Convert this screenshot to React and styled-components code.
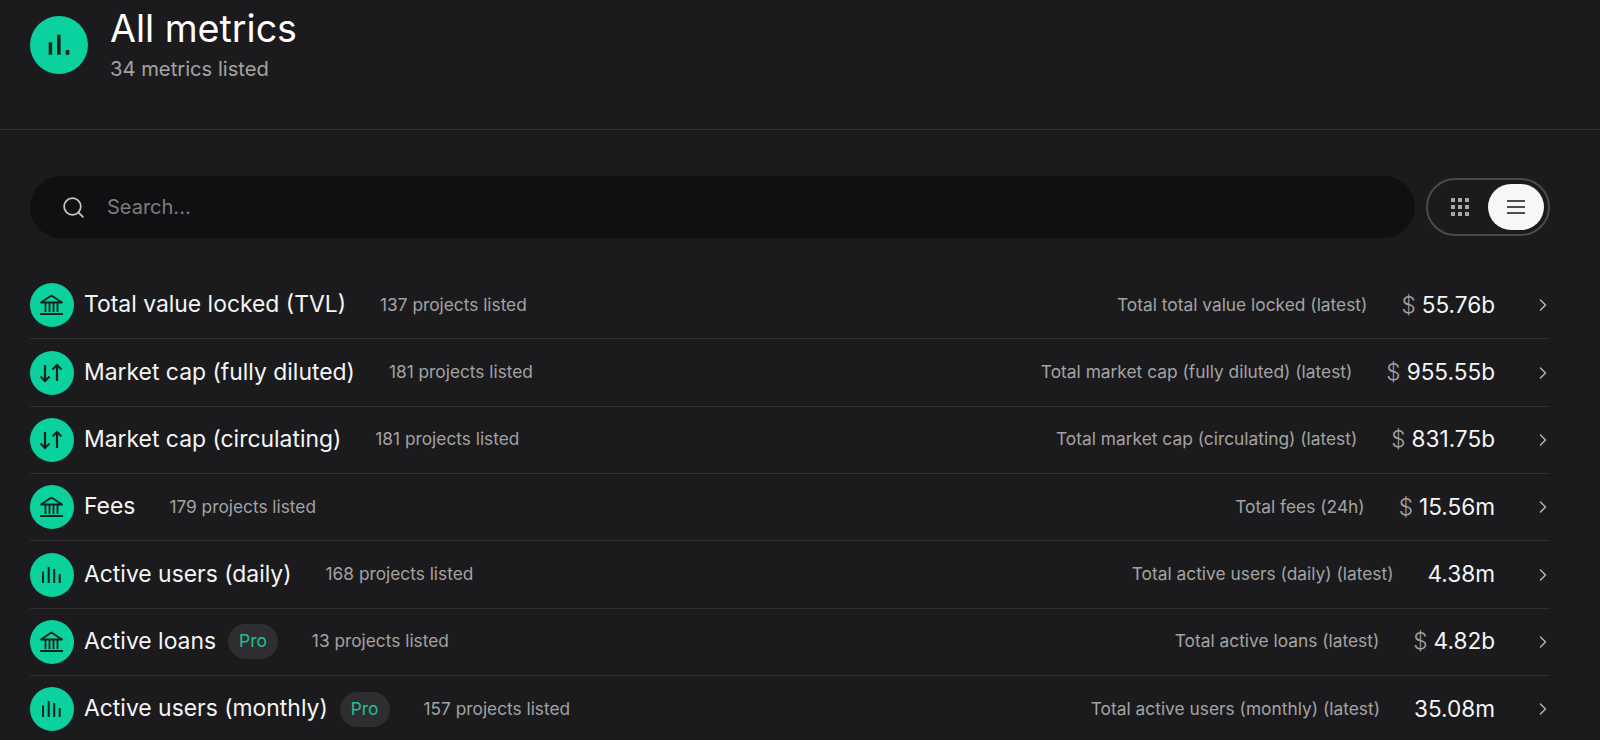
import React from 'react';
import styled, { createGlobalStyle } from 'styled-components';
import { Search, ChevronRight } from 'lucide-react';

const metrics = [
  { name: 'Total value locked (TVL)', icon: 'bank', projects: 137, label: 'Total total value locked (latest)', currency: true, value: '55.76b' },
  { name: 'Market cap (fully diluted)', icon: 'swap', projects: 181, label: 'Total market cap (fully diluted) (latest)', currency: true, value: '955.55b' },
  { name: 'Market cap (circulating)', icon: 'swap', projects: 181, label: 'Total market cap (circulating) (latest)', currency: true, value: '831.75b' },
  { name: 'Fees', icon: 'bank', projects: 179, label: 'Total fees (24h)', currency: true, value: '15.56m' },
  { name: 'Active users (daily)', icon: 'bars', projects: 168, label: 'Total active users (daily) (latest)', value: '4.38m' },
  { name: 'Active loans', icon: 'bank', pro: true, projects: 13, label: 'Total active loans (latest)', currency: true, value: '4.82b' },
  { name: 'Active users (monthly)', icon: 'bars', pro: true, projects: 157, label: 'Total active users (monthly) (latest)', value: '35.08m' },
];

const iconInk = '#10231d';

const BankIcon = () => (
  <svg width="44" height="44" viewBox="0 0 44 44" fill="none" stroke={iconInk} strokeWidth="1.8">
    <path d="M21.5 12.5L32 19.5H11z" strokeLinejoin="round" />
    <path d="M15.5 20v9M19.5 20v9M23.5 20v9M27.5 20v9" />
    <path d="M10 31h23" strokeWidth="2" />
  </svg>
);

const SwapIcon = () => (
  <svg width="44" height="44" viewBox="0 0 44 44" fill="none" stroke={iconInk} strokeWidth="2.2">
    <path d="M15 14v16M10.5 25.5L15 30l4.5-4.5" />
    <path d="M27 30V14M22.5 18.5L27 14l4.5 4.5" />
  </svg>
);

const BarsIcon = () => (
  <svg width="44" height="44" viewBox="0 0 44 44" fill="none" stroke={iconInk} strokeWidth="2">
    <path d="M13 18.5V30M18.7 14v16M24.2 16v14M29.7 21v9" />
  </svg>
);

const HeaderBars = () => (
  <svg width="58" height="58" viewBox="0 0 58 58" fill={iconInk}>
    <rect x="18.7" y="26.3" width="3.4" height="12.4" />
    <rect x="27" y="18.7" width="3.6" height="20" />
    <rect x="35.7" y="34" width="3.6" height="4.7" />
  </svg>
);

const GridIcon = () => (
  <svg width="18" height="18" viewBox="0 0 18 18" fill="#a8a8a8">
    {[0, 7, 14].map((y) =>
      [0, 7, 14].map((x) => <rect key={`${x}-${y}`} x={x} y={y} width="4" height="4" />)
    )}
  </svg>
);

const ListIcon = () => (
  <svg width="18" height="14" viewBox="0 0 18 14" fill="none" stroke="#4d4d4f" strokeWidth="2">
    <path d="M0 1h18M0 7h18M0 13h18" />
  </svg>
);

const MetricIcon = ({ type }) => {
  if (type === 'bank') return <BankIcon />;
  if (type === 'swap') return <SwapIcon />;
  return <BarsIcon />;
};

const App = () => (
  <Page>
    <GlobalStyle />
    <Header>
      <HeaderIcon>
        <HeaderBars />
      </HeaderIcon>
      <HeaderText>
        <Title>All metrics</Title>
        <Subtitle>34 metrics listed</Subtitle>
      </HeaderText>
    </Header>

    <Content>
      <Toolbar>
        <SearchBar>
          <Search size={25} strokeWidth={1.7} color="#c4c4c4" />
          <SearchInput placeholder="Search..." />
        </SearchBar>
        <ViewToggle>
          <ToggleButton>
            <GridIcon />
          </ToggleButton>
          <ToggleButton $active>
            <ListIcon />
          </ToggleButton>
        </ViewToggle>
      </Toolbar>

      <List>
        {metrics.map((m) => (
          <Row key={m.name}>
            <RowIcon>
              <MetricIcon type={m.icon} />
            </RowIcon>
            <Name>{m.name}</Name>
            {m.pro && <ProBadge>Pro</ProBadge>}
            <Projects>{m.projects} projects listed</Projects>
            <Total>{m.label}</Total>
            <Value>
              {m.currency && <Currency>$</Currency>}
              {m.value}
            </Value>
            <Chevron>
              <ChevronRight size={20} strokeWidth={1.7} color="#b5b5b5" />
            </Chevron>
          </Row>
        ))}
      </List>
    </Content>
  </Page>
);

const GlobalStyle = createGlobalStyle`
  html, body {
    margin: 0;
    height: 100%;
    background: #1b1b1d;
    overflow: hidden;
  }
`;

const Page = styled.div`
  height: 740px;
  overflow: hidden;
  background: #1b1b1d;
  font-family: Inter, 'Liberation Sans', sans-serif;
  color: #fff;
`;

const Header = styled.header`
  box-sizing: border-box;
  height: 130px;
  display: flex;
  gap: 22px;
  padding: 16px 30px 0;
  border-bottom: 1px solid #2f2f31;
`;

const HeaderIcon = styled.div`
  width: 58px;
  height: 58px;
  border-radius: 50%;
  background: #0bd19f;
`;

const HeaderText = styled.div`
  display: flex;
  flex-direction: column;
`;

const Title = styled.h1`
  margin: -10px 0 0;
  font-size: 37.6px;
  line-height: 46px;
  font-weight: 400;
`;

const Subtitle = styled.div`
  margin-top: 4px;
  font-size: 20.2px;
  line-height: 26px;
  color: #a3a3a3;
`;

const Content = styled.main`
  padding: 46px 50px 0 30px;
`;

const Toolbar = styled.div`
  display: flex;
  align-items: center;
  gap: 11px;
  margin-bottom: 34px;
`;

const SearchBar = styled.div`
  flex: 1;
  height: 62px;
  box-sizing: border-box;
  padding: 0 31px;
  border-radius: 31px;
  background: #101013;
  display: flex;
  align-items: center;
  gap: 21px;
`;

const SearchInput = styled.input`
  flex: 1;
  padding: 0;
  border: 0;
  outline: 0;
  background: transparent;
  font: 400 20px Inter, 'Liberation Sans', sans-serif;
  color: #fff;

  &::placeholder {
    color: #7d7d7f;
    opacity: 1;
  }
`;

const ViewToggle = styled.div`
  box-sizing: border-box;
  width: 124px;
  height: 58px;
  padding: 4px 4px 4px 10px;
  border: 2px solid #4a4a4c;
  border-radius: 29px;
  display: flex;
  align-items: center;
  justify-content: space-between;
`;

const ToggleButton = styled.div`
  width: ${(p) => (p.$active ? '56px' : '44px')};
  height: 46px;
  border-radius: 23px;
  background: ${(p) => (p.$active ? '#f7f7f7' : 'transparent')};
  display: flex;
  align-items: center;
  justify-content: center;
`;

const List = styled.div`
  display: flex;
  flex-direction: column;
`;

const Row = styled.div`
  box-sizing: border-box;
  height: 67.35px;
  display: flex;
  align-items: center;
  border-bottom: 1px solid #2f2f31;
`;

const RowIcon = styled.div`
  flex: none;
  width: 44px;
  height: 44px;
  border-radius: 50%;
  background: #0bd19f;
  margin-right: 10px;
`;

const Name = styled.div`
  margin-bottom: 2px;
  font-size: 22.9px;
  white-space: nowrap;
  color: #f5f5f5;
`;

const ProBadge = styled.div`
  margin-left: 12px;
  padding: 0 11px;
  height: 35px;
  border-radius: 17.5px;
  background: #2e2e30;
  color: #1fbf95;
  font-size: 17.4px;
  line-height: 34px;
`;

const Projects = styled.div`
  margin: 0 0 2px 34px;
  font-size: 17.3px;
  white-space: nowrap;
  color: #a3a3a3;
`;

const Total = styled.div`
  margin: 0 0 2px auto;
  font-size: 17.35px;
  white-space: nowrap;
  color: #a3a3a3;
`;

const Value = styled.div`
  margin: 0 0 2px 34px;
  font-size: 22.6px;
  white-space: nowrap;
  color: #f5f5f5;
`;

const Currency = styled.span`
  color: #a3a3a3;
  font-weight: 300;
  margin-right: 6px;
`;

const Chevron = styled.div`
  flex: none;
  width: 58px;
  display: flex;
  justify-content: flex-end;
  margin-right: -3px;
`;

export default App;
